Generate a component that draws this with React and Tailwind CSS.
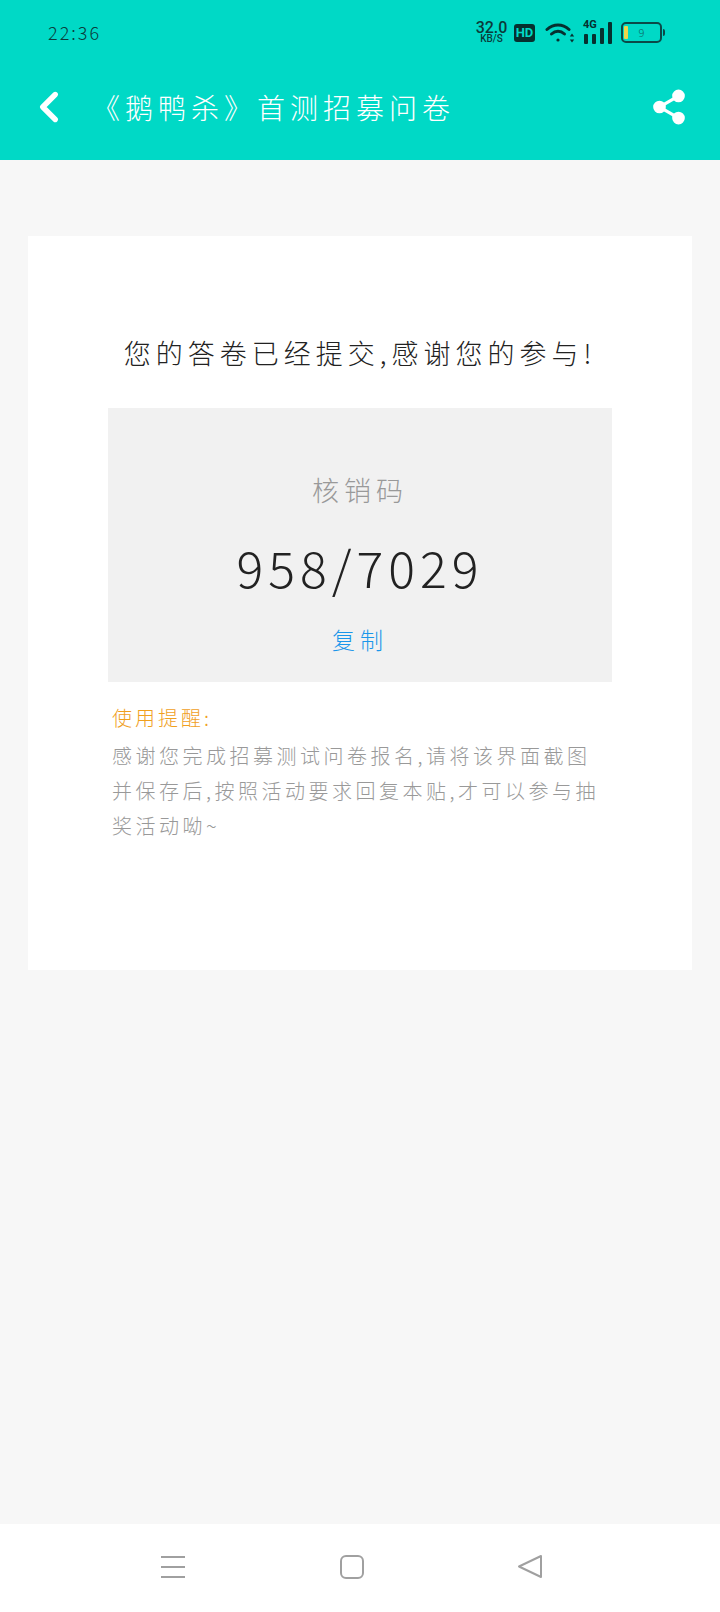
// Survey submitted confirmation screen
import { Share2, ChevronLeft } from 'lucide-react';

const cjk = { fontFamily: '"Noto Sans CJK SC", sans-serif' };

const StatusBar = () => (
  <div className="h-[64px] flex items-center justify-between pl-[48px] pr-[58px] pt-[1px] text-[#0b3b3a]">
    <span className="text-[18px] tracking-[2px] font-light" style={cjk}>22:36</span>
    <div className="flex items-center">
      <div className="flex flex-col items-center w-[33px] font-[Roboto] font-medium text-[#0b3b3a]">
        <span className="text-[16px] leading-[13px]">32.0</span>
        <span className="text-[10px] leading-[10px]">KB/S</span>
      </div>
      <div className="ml-[6px] w-[21px] h-[18px] rounded-[3px] bg-[#06302f] text-[#00d9c6] text-[13px] leading-[18px] text-center font-[Roboto] font-bold">HD</div>
      {/* wifi */}
      <svg className="ml-[10px]" width="30" height="24" viewBox="0 0 30 24" fill="none" stroke="#06302f" strokeWidth="3" strokeLinecap="round">
        <path d="M2 8.5c6.5-6 15.5-6 22 0" />
        <path d="M6.5 13c4-3.6 9-3.6 13 0" />
        <circle cx="13" cy="19" r="1.6" fill="#06302f" stroke="none" />
        <path d="M27 12.5l-2.2 3h4.4z" fill="#06302f" stroke="none" />
        <path d="M27 21.5l-2.2-3h4.4z" fill="#06302f" stroke="none" />
      </svg>
      {/* 4G signal */}
      <div className="relative ml-[8px] w-[31px] h-[24px]">
        <span className="absolute left-0 -top-[2px] text-[11px] leading-[12px] font-[Roboto] font-bold text-[#06302f]">4G</span>
        <svg className="absolute inset-0" width="31" height="24" viewBox="0 0 31 24" fill="#06302f">
          <rect x="1" y="13" width="4" height="10" rx="1" />
          <rect x="9" y="13" width="4" height="10" rx="1" />
          <rect x="17" y="7" width="4" height="16" rx="1" />
          <rect x="25" y="1" width="4" height="22" rx="1" />
        </svg>
      </div>
      {/* battery */}
      <div className="relative ml-[7px] w-[41px] h-[21px] rounded-[5px] border-2 border-[#0b4a48] flex items-center">
        <div className="absolute left-[1px] top-[2px] bottom-[2px] w-[4px] bg-[#f0d64a] rounded-[1px]" />
        <span className="w-full text-center text-[11px] leading-none text-[#0b6a66] font-light" style={cjk}>9</span>
        <div className="absolute -right-[5px] top-[5px] w-[2px] h-[7px] bg-[#0b4a48] rounded-r" />
      </div>
    </div>
  </div>
);

const App = () => {
  return (
    <div className="w-[720px] h-[1612px] flex flex-col bg-[#f7f7f7]" style={cjk}>
      <header className="h-[160px] bg-[#00d9c6] shrink-0">
        <StatusBar />
        <div className="h-[96px] flex items-center justify-between pl-[24px] pr-[32px] pb-[10px]">
          <div className="flex items-center">
            <ChevronLeft size={50} color="#fff" strokeWidth={2.6} />
            <h1 className="ml-[18px] text-[28px] font-light text-white tracking-[5px]">《鹅鸭杀》首测招募问卷</h1>
          </div>
          <Share2 size={38} color="#fff" fill="#fff" strokeWidth={2} />
        </div>
      </header>

      <main className="flex-1">
        <div className="mx-[28px] mt-[76px] h-[734px] bg-white px-[80px] pt-[96px]">
          <p className="text-center text-[27px] leading-[42px] font-light text-[#222] tracking-[5px] whitespace-nowrap -mx-[20px]">您的答卷已经提交,感谢您的参与!</p>
          <div className="mt-[34px] h-[274px] bg-[#f1f1f1] flex flex-col items-center pt-[62px]">
            <span className="text-[27px] leading-[40px] font-light text-[#999] tracking-[5px]">核销码</span>
            <span className="mt-[24px] text-[50px] leading-[64px] font-light text-[#222] tracking-[5px]">958/7029</span>
            <span className="mt-[25px] text-[23px] leading-[32px] font-light text-[#1a96ea] tracking-[5px]">复制</span>
          </div>
          <div className="px-[4px] mt-[20px]">
            <p className="text-[20px] leading-[32px] font-light text-[#f0a01e] tracking-[3px]">使用提醒:</p>
            <p className="mt-[4px] text-[20px] leading-[35px] font-light text-[#999] tracking-[3.5px] w-[490px]">感谢您完成招募测试问卷报名,请将该界面截图并保存后,按照活动要求回复本贴,才可以参与抽奖活动呦~</p>
          </div>
        </div>
      </main>

      {/* system nav bar */}
      <nav className="h-[88px] shrink-0 bg-white flex items-center pb-[2px] pl-[161px]">
        <div className="w-[24px] flex flex-col gap-[8px]">
          <div className="h-[2px] bg-[#a0a0a0]" />
          <div className="h-[2px] bg-[#a0a0a0]" />
          <div className="h-[2px] bg-[#a0a0a0]" />
        </div>
        <div className="ml-[155px] w-[24px] h-[24px] rounded-[6px] border-2 border-[#a0a0a0]" />
        <svg className="ml-[153px]" width="26" height="26" viewBox="0 0 26 26" fill="none" stroke="#a0a0a0" strokeWidth="2" strokeLinejoin="round">
          <path d="M24 2v21L2 12.5z" />
        </svg>
      </nav>
    </div>
  );
};

export default App;
